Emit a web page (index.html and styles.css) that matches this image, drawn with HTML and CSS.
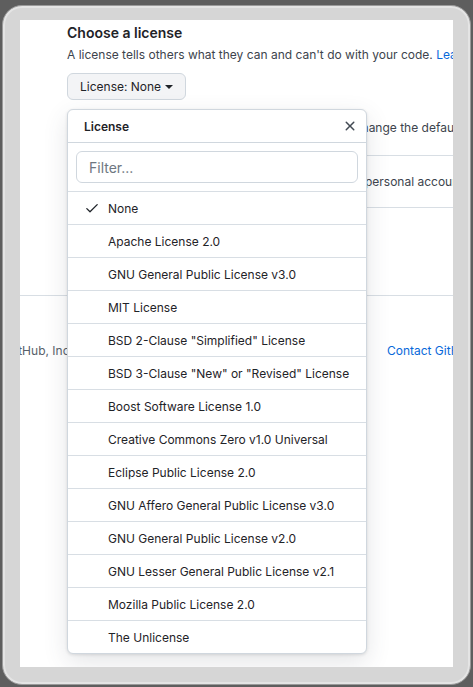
FILE: index.html
```html
<!DOCTYPE html>
<html lang="en">
<head>
<meta charset="utf-8">
<title>Choose a license</title>
<link rel="stylesheet" href="styles.css">
</head>
<body>
<div class="frame">
  <div class="panel">
    <section class="form">
      <h2 class="title">Choose a license</h2>
      <p class="desc">A license tells others what they can and can't do with your code. <a class="link" href="#">Learn more about licenses.</a></p>
      <button class="btn" type="button">License: None <span class="caret"></span></button>
      <p class="note note-1">This will set <b>main</b> as the default branch. Change the default name in your settings.</p>
      <hr class="rule">
      <p class="note note-2">You are creating a public repository in your personal account.</p>
      <hr class="rule rule-2">
    </section>
    <footer class="footer">
      <span class="copy">© 2023 GitHub, Inc.</span>
      <a class="link contact" href="#">Contact GitHub</a>
    </footer>

    <div class="menu">
      <div class="menu-header">
        <span class="menu-title">License</span>
        <svg class="close" width="16" height="16" viewBox="0 0 16 16" aria-hidden="true"><path d="M3.72 3.72a.75.75 0 0 1 1.06 0L8 6.94l3.22-3.22a.749.749 0 0 1 1.275.326.749.749 0 0 1-.215.734L9.06 8l3.220 3.22a.749.749 0 0 1-.326 1.275.749.749 0 0 1-.734-.215L8 9.06l-3.22 3.22a.751.751 0 0 1-1.042-.018.751.751 0 0 1-.018-1.042L6.94 8 3.72 4.78a.75.75 0 0 1 0-1.06Z"/></svg>
      </div>
      <div class="menu-filter">
        <input class="filter" type="text" placeholder="Filter...">
      </div>
      <ul class="items">
        <li class="item"><svg class="check" width="16" height="16" viewBox="0 0 16 16" aria-hidden="true"><path d="M2.8 8.6 6 11.8 13.2 4.6"/></svg><span>None</span></li>
        <li class="item"><span>Apache License 2.0</span></li>
        <li class="item"><span>GNU General Public License v3.0</span></li>
        <li class="item"><span>MIT License</span></li>
        <li class="item"><span>BSD 2-Clause "Simplified" License</span></li>
        <li class="item"><span>BSD 3-Clause "New" or "Revised" License</span></li>
        <li class="item"><span>Boost Software License 1.0</span></li>
        <li class="item"><span>Creative Commons Zero v1.0 Universal</span></li>
        <li class="item"><span>Eclipse Public License 2.0</span></li>
        <li class="item"><span>GNU Affero General Public License v3.0</span></li>
        <li class="item"><span>GNU General Public License v2.0</span></li>
        <li class="item"><span>GNU Lesser General Public License v2.1</span></li>
        <li class="item"><span>Mozilla Public License 2.0</span></li>
        <li class="item"><span>The Unlicense</span></li>
      </ul>
    </div>
  </div>
</div>
</body>
</html>
```

FILE: styles.css
```css
* { box-sizing: border-box; }
html, body { margin: 0; padding: 0; }
body {
  width: 473px;
  height: 687px;
  overflow: hidden;
  background: #5e5e5e;
  font-family: "Inter", "Liberation Sans", sans-serif;
  color: #1f2328;
}
.frame {
  margin: 5px 2px 2px;
  height: 680px;
  border-radius: 20px;
  background: #d6d6d6;
  border: 1px solid #9a9a9a;
  box-shadow: inset 0 0 0 2px #e4e4e4;
  padding: 14px 17px 17px;
}
.panel {
  position: relative;
  height: 647px;
  background: #fff;
  overflow: hidden;
}
.form {
  padding: 3px 0 0 47px;
  white-space: nowrap;
}
.title {
  margin: 0;
  font-size: 14px;
  line-height: 20px;
  font-weight: 600;
}
.desc {
  margin: 3px 0 0;
  font-size: 12px;
  line-height: 18px;
  color: #3d444d;
}
.link { color: #0969da; text-decoration: none; }
.btn {
  margin-top: 9px;
  display: flex;
  align-items: center;
  gap: 4px;
  height: 27px;
  padding: 0 12px;
  border: 1px solid #d0d7de;
  border-radius: 6px;
  background: #f3f4f6;
  font: 12px/1 "Inter", "Liberation Sans", sans-serif;
  color: #1f2328;
}
.caret {
  width: 0; height: 0;
  border-left: 4px solid transparent;
  border-right: 4px solid transparent;
  border-top: 4px solid #1f2328;
}
.note {
  margin: 19px 0 0;
  font-size: 12px;
  line-height: 18px;
  color: #3d444d;
}
.note b { font-weight: 400; }
.note-1 { padding-left: 58px; }
.note-2 { margin-top: 17px; padding-left: 51px; }
.rule {
  margin: 18px 0 0;
  border: 0;
  border-top: 1px solid #d8dee4;
  height: 0;
}
.rule-2 { margin-top: 16px; }
.footer {
  margin-top: 87px;
  border-top: 1px solid #d8dee4;
  padding-top: 46px;
  display: flex;
  font-size: 12px;
  line-height: 18px;
  white-space: nowrap;
}
.copy { color: #57606a; margin-left: -61px; }
.contact { margin-left: auto; margin-right: -21px; }

.menu {
  position: absolute;
  left: 47px;
  top: 89px;
  width: 300px;
  background: #fff;
  border: 1px solid #d0d7de;
  border-radius: 6px;
  box-shadow: 0 1px 3px rgba(31,35,40,0.12), 0 8px 24px rgba(66,74,83,0.14);
  overflow: hidden;
}
.menu-header {
  height: 33px;
  display: flex;
  align-items: center;
  justify-content: space-between;
  padding: 0 8px 0 16px;
  border-bottom: 1px solid #d0d7de;
}
.menu-title { font-size: 12px; font-weight: 600; }
.close { fill: #424a53; }
.menu-filter {
  padding: 8px;
  border-bottom: 1px solid #d8dee4;
}
.filter {
  display: block;
  width: 100%;
  height: 32px;
  padding: 0 12px;
  border: 1px solid #d0d7de;
  border-radius: 6px;
  font: 14px "Inter", "Liberation Sans", sans-serif;
  color: #1f2328;
  background: #fff;
}
.filter::placeholder { color: #6e7781; }
.items { list-style: none; margin: 0; padding: 0; }
.item {
  position: relative;
  height: 33px;
  display: flex;
  align-items: center;
  padding-left: 40px;
  font-size: 12px;
  border-top: 1px solid #d8dee4;
}
.item:first-child { height: 32px; border-top: 0; }
.check {
  position: absolute;
  left: 16px;
  top: 8px;
  fill: none;
  stroke: #1f2328;
  stroke-width: 1.3;
  stroke-linecap: round;
  stroke-linejoin: round;
}
```
